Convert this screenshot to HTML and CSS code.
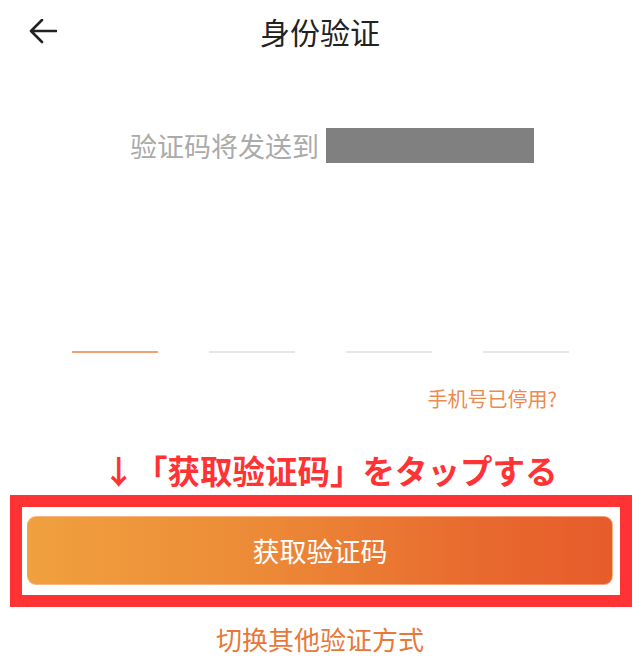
FILE: index.html
```html
<!DOCTYPE html>
<html lang="zh-CN">
<head>
    <meta charset="UTF-8">
    <meta name="viewport" content="width=device-width, initial-scale=1.0">
    <title>身份验证</title>
    <link rel="stylesheet" href="styles.css">
</head>
<body>
    <div class="page">
        <header class="top-bar">
            <button class="back-button" aria-label="返回">
                <svg width="28" height="26" viewBox="0 0 28 26">
                    <path d="M2 12 H27 M13 1 L2 12 L13 23" fill="none" stroke="#222" stroke-width="2.6" stroke-linecap="round" stroke-linejoin="round"/>
                </svg>
            </button>
            <h1 class="title">身份验证</h1>
        </header>

        <div class="send-to">
            <span class="send-text">验证码将发送到</span>
            <span class="phone-mask"></span>
        </div>

        <div class="code-lines">
            <span class="code-line active"></span>
            <span class="code-line"></span>
            <span class="code-line"></span>
            <span class="code-line"></span>
        </div>

        <div class="phone-disabled">手机号已停用?</div>

        <div class="hint">↓「获取验证码」をタップする</div>

        <div class="highlight-box">
            <button class="get-code">获取验证码</button>
        </div>

        <div class="switch-method">切换其他验证方式</div>
    </div>
</body>
</html>
```

FILE: styles.css
```css
/* Base */
* {
    margin: 0;
    padding: 0;
    box-sizing: border-box;
}

body {
    font-family: "Noto Sans CJK SC", "Noto Sans", sans-serif;
    background-color: #fff;
    color: #222;
}

.page {
    width: 640px;
    height: 671px;
    overflow: hidden;
}

/* Header */
.top-bar {
    position: relative;
    height: 62px;
    display: flex;
    align-items: center;
    justify-content: center;
}

.back-button {
    position: absolute;
    left: 29px;
    top: 19px;
    background: none;
    border: none;
    display: flex;
}

.title {
    font-size: 30px;
    font-weight: 400;
    line-height: 62px;
    color: #222;
}

/* Send to row */
.send-to {
    display: flex;
    justify-content: center;
    align-items: center;
    gap: 7px;
    margin-top: 66px;
    padding-left: 24px;
    height: 35px;
}

.send-text {
    font-size: 27px;
    line-height: 35px;
    color: #aaa;
}

.phone-mask {
    width: 208px;
    height: 35px;
    background-color: #808080;
}

/* Code input lines */
.code-lines {
    display: flex;
    justify-content: center;
    gap: 51px;
    margin-top: 188px;
}

.code-line {
    width: 86px;
    height: 2px;
    background-color: #e6e6e6;
}

.code-line.active {
    background-color: #f2a170;
}

.phone-disabled {
    margin-top: 34px;
    padding-right: 83px;
    text-align: right;
    font-size: 20px;
    line-height: 24px;
    color: #ee8a50;
}

/* Annotation */
.hint {
    margin-top: 39px;
    padding-left: 20px;
    text-align: center;
    font-family: "Noto Sans CJK JP", "Noto Sans CJK SC", sans-serif;
    font-size: 32.5px;
    font-weight: 700;
    line-height: 40px;
    color: #ff3333;
}

.highlight-box {
    margin: 5px 8px 0 10px;
    border: 12px solid #ff3333;
    padding: 9px 7px 10px 5px;
    background-color: #fff;
}

.get-code {
    display: block;
    width: 100%;
    height: 69px;
    border: 1px solid rgba(255, 200, 170, 0.6);
    border-radius: 9px;
    background: linear-gradient(90deg, #f0a03e 0%, #ec8a37 40%, #e8692e 78%, #e65c2b 100%);
    color: #fff;
    font-family: inherit;
    font-size: 27px;
    line-height: 67px;
}

.switch-method {
    margin-top: 16px;
    text-align: center;
    font-size: 26px;
    line-height: 32px;
    color: #e8783a;
}
```
